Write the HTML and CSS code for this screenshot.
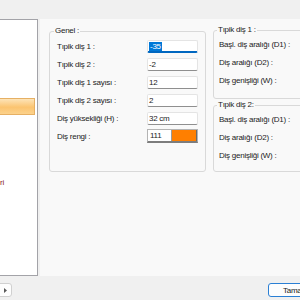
FILE: index.html
```html
<!DOCTYPE html>
<html lang="tr">
<head>
    <meta charset="UTF-8">
    <title>Diş ayarları</title>
    <link rel="stylesheet" href="styles.css">
</head>
<body>
    <div class="window">
        <div class="topbar"></div>

        <div class="main">
            <div class="sidebar">
                <div class="item selected"></div>
                <div class="item item-red">ri</div>
            </div>

            <div class="content">
                <div class="group group-main">
                    <span class="group-title">Genel :</span>
                    <div class="form-grid">
                        <label>Tıpik diş 1 :</label>
                        <div class="field focused"><span class="sel">-35</span></div>

                        <label>Tıpik diş 2 :</label>
                        <div class="field">-2</div>

                        <label>Tıpik diş 1 sayısı :</label>
                        <div class="field">12</div>

                        <label>Tıpik diş 2 sayısı :</label>
                        <div class="field">2</div>

                        <label>Diş yüksekliği (H) :</label>
                        <div class="field">32 cm</div>

                        <label>Diş rengi :</label>
                        <div class="color-field">
                            <span class="color-code">111</span>
                            <span class="color-swatch"></span>
                        </div>
                    </div>
                </div>

                <div class="side">
                    <div class="group group-side">
                        <span class="group-title">Tıpik diş 1 :</span>
                        <div class="row">Başl. diş aralığı (D1) :</div>
                        <div class="row">Diş aralığı (D2) :</div>
                        <div class="row">Diş genişliği (W) :</div>
                    </div>
                    <div class="group group-side group-last">
                        <span class="group-title">Tıpik diş 2:</span>
                        <div class="row">Başl. diş aralığı (D1) :</div>
                        <div class="row">Diş aralığı (D2) :</div>
                        <div class="row">Diş genişliği (W) :</div>
                    </div>
                </div>
            </div>
        </div>

        <div class="bottombar">
            <button class="nav-btn">
                <svg width="3" height="5" viewBox="0 0 3 5"><path d="M0 0L3 2.5L0 5Z" fill="#5a5a5a"/></svg>
            </button>
            <button class="ok-btn">Tamam</button>
        </div>
    </div>
</body>
</html>
```

FILE: styles.css
```css
body {
    margin: 0;
    width: 300px;
    height: 300px;
    overflow: hidden;
    font-family: "Liberation Sans", Arial, sans-serif;
    font-size: 8px;
    letter-spacing: -0.25px;
    color: #1b1b1b;
    background-color: #f0f0f0;
}
.window {
    width: 340px;
    height: 300px;
    display: flex;
    flex-direction: column;
}
.topbar {
    height: 19px;
    background-color: #f0f0f0;
}
.main {
    display: flex;
    height: 257px;
}
.sidebar {
    width: 37px;
    flex-shrink: 0;
    padding-top: 78px;
    background-color: #fff;
    border: 1px solid #a3a3a8;
    border-left: none;
}
.item {
    height: 17px;
    box-sizing: border-box;
}
.selected {
    margin-right: 2px;
    border: 1px solid #e6b064;
    border-left: none;
    background: linear-gradient(#fde4b8, #fbc470 55%, #fcd28c);
}
.item-red {
    margin-top: 62px;
    height: 12px;
    line-height: 12px;
    color: #8c1c2c;
}
.content {
    flex: 1;
    display: flex;
    align-items: flex-start;
    gap: 7px;
    margin-left: 2px;
    padding: 11px 0 0 9px;
    background-color: #f9f9f9;
}
.group {
    border: 1px solid #d9d9d9;
    border-radius: 3px;
}
.group-title {
    display: block;
    width: fit-content;
    height: 12px;
    line-height: 12px;
    margin: -7px 0 0 -3px;
    padding: 0 1px;
    background-color: #f9f9f9;
}
.group-main {
    width: 141px;
    margin-top: 1px;
    padding: 0 7px 26px;
}
.form-grid {
    display: grid;
    grid-template-columns: 90px 51px;
    grid-auto-rows: 18px;
    align-items: center;
}
.field {
    height: 13px;
    box-sizing: border-box;
    line-height: 11px;
    padding-left: 1px;
    background-color: #fff;
    border: 1px solid #e4e4e4;
    border-bottom-color: #8f8f8f;
    border-radius: 2px;
}
.focused {
    border-bottom: 2px solid #0067c0;
}
.sel {
    padding: 0 1px;
    background-color: #0078d7;
    color: #fff;
}
.color-field {
    display: flex;
    height: 14px;
    box-sizing: border-box;
    border: 1px solid #b4b4b4;
    border-bottom: 2px solid #7d7d7d;
    background-color: #fff;
}
.color-code {
    width: 21px;
    line-height: 11px;
    padding-left: 2px;
    border-right: 1px solid #9a9a9a;
}
.color-swatch {
    flex: 1;
    background-color: #ff7f00;
    border-right: 1px solid #6a6a6a;
}
.side {
    width: 120px;
    display: flex;
    flex-direction: column;
    gap: 6px;
}
.group-side {
    padding: 0 5px 8px;
}
.group-side .group-title {
    margin-left: -2px;
}
.group-last {
    padding-bottom: 6px;
}
.row {
    height: 18px;
    line-height: 18px;
    white-space: nowrap;
}
.bottombar {
    height: 24px;
    box-sizing: border-box;
    display: flex;
    align-items: flex-start;
    padding-top: 7px;
    background-color: #f0f0f0;
}
.nav-btn {
    width: 18px;
    height: 14px;
    margin-left: -6px;
    padding: 0 0 0 4px;
    display: flex;
    align-items: center;
    justify-content: center;
    background-color: #fdfdfd;
    border: 1px solid #d0d0d0;
    border-radius: 3px;
}
.ok-btn {
    width: 55px;
    height: 14px;
    margin-left: auto;
    margin-right: 17px;
    padding: 0;
    font-family: inherit;
    font-size: 8px;
    letter-spacing: -0.25px;
    color: #1b1b1b;
    background-color: #fdfdfd;
    border: 1px solid #2a7fd4;
    border-radius: 3px;
}
```
